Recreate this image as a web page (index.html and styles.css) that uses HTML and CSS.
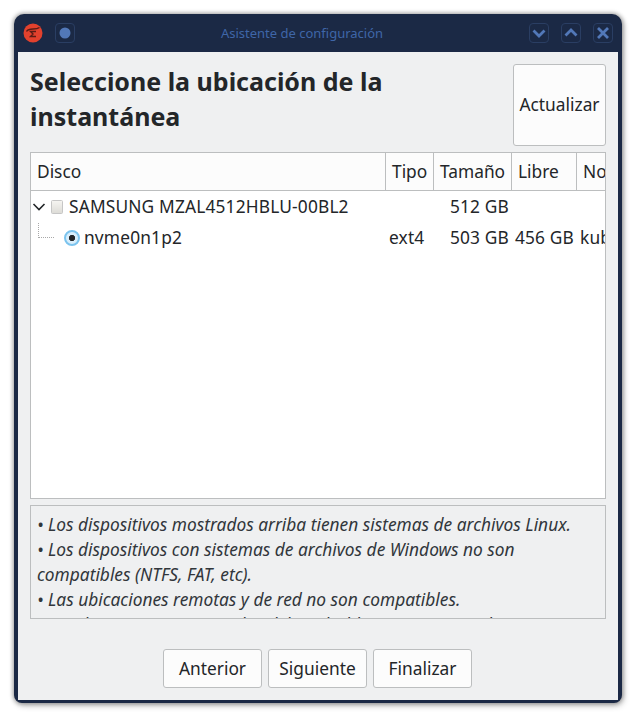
FILE: index.html
```html
<!DOCTYPE html>
<html lang="es">
<head>
<meta charset="utf-8">
<title>Asistente de configuración</title>
<link rel="stylesheet" href="styles.css">
</head>
<body>
<div class="window">
  <header class="titlebar">
    <div class="tb-group">
      <svg class="app-icon" width="20" height="20" viewBox="0 0 20 20"><circle cx="10" cy="10" r="9.500" fill="#e2412d"/><path d="M3.500 8.500c1.500-2.500 4-2.500 6.500-2.500s4.500 0 6.500-1.500" fill="none" stroke="#5a1c16" stroke-width="1.400"/><path d="M13 8.500H7.500l2.500 2.500-2.500 2.500H13" fill="none" stroke="#5a1c16" stroke-width="1.400"/></svg>
      <span class="tb-btn"><svg width="20" height="20" viewBox="0 0 20 20"><circle cx="10" cy="10" r="5.500" fill="#5278b8"/></svg></span>
    </div>
    <div class="tb-title">Asistente de configuración</div>
    <div class="tb-group tb-right">
      <span class="tb-btn"><svg width="20" height="20" viewBox="0 0 20 20"><path d="M4.500 7.500 10 13l5.500-5.500" fill="none" stroke="#5278b8" stroke-width="2.800"/></svg></span>
      <span class="tb-btn"><svg width="20" height="20" viewBox="0 0 20 20"><path d="M4.500 12.500 10 7l5.500 5.500" fill="none" stroke="#5278b8" stroke-width="2.800"/></svg></span>
      <span class="tb-btn"><svg width="20" height="20" viewBox="0 0 20 20"><path d="M5 5l10 10M15 5 5 15" fill="none" stroke="#5278b8" stroke-width="2.800"/></svg></span>
    </div>
  </header>
  <main class="content">
    <div class="head-row">
      <h1 class="heading">Seleccione la ubicación de la instantánea</h1>
      <button class="btn btn-refresh">Actualizar</button>
    </div>
    <div class="tree">
      <div class="tree-head">
        <div class="th c-disk">Disco</div>
        <div class="th c-type">Tipo</div>
        <div class="th c-size">Tamaño</div>
        <div class="th c-free">Libre</div>
        <div class="th c-name">Nombre</div>
      </div>
      <div class="row">
        <div class="cell c-disk">
          <svg class="chev" width="14" height="10" viewBox="0 0 14 10"><path d="M1.500 2 7 7.500 12.500 2" fill="none" stroke="#232629" stroke-width="1.600"/></svg>
          <svg class="disk-icon" width="12" height="14" viewBox="0 0 12 14"><defs><linearGradient id="dg" x1="0" y1="0" x2="0" y2="1"><stop offset="0" stop-color="#f6f5f2"/><stop offset="1" stop-color="#dcdbd6"/></linearGradient></defs><rect x=".5" y=".5" width="11" height="13" rx="1" fill="url(#dg)" stroke="#c6c6c6"/></svg>
          <span class="disk-name">SAMSUNG MZAL4512HBLU-00BL2</span>
        </div>
        <div class="cell c-type"></div>
        <div class="cell c-size right">512 GB</div>
        <div class="cell c-free"></div>
        <div class="cell c-name"></div>
      </div>
      <div class="row">
        <div class="cell c-disk">
          <span class="branch"></span>
          <span class="radio"></span>
          <span class="part-name">nvme0n1p2</span>
        </div>
        <div class="cell c-type">ext4</div>
        <div class="cell c-size right">503 GB</div>
        <div class="cell c-free right">456 GB</div>
        <div class="cell c-name">kubuntu</div>
      </div>
    </div>
    <div class="notes">
      <p>• Los dispositivos mostrados arriba tienen sistemas de archivos Linux.</p>
      <p>• Los dispositivos con sistemas de archivos de Windows no son compatibles (NTFS, FAT, etc).</p>
      <p>• Las ubicaciones remotas y de red no son compatibles.</p>
      <p>• Los dispositivos encriptados deben desbloquearse antes de usarse.</p>
    </div>
    <div class="actions">
      <button class="btn btn-nav">Anterior</button>
      <button class="btn btn-nav">Siguiente</button>
      <button class="btn btn-nav">Finalizar</button>
    </div>
  </main>
</div>
</body>
</html>
```
FILE: styles.css
```css
* { box-sizing: border-box; }
html, body { margin: 0; height: 100%; background: #fff; }
body { padding: 14px 14px 15px 14px; font-family: "Noto Sans", sans-serif; font-size: 17.330px; color: #232629; }
.window { width: 608px; height: 689px; background: #1b2945; border-radius: 10px 10px 8px 8px; box-shadow: 0 0 4px 1px rgba(0,0,0,.35), 2px 3px 6px rgba(0,0,0,.2); display: flex; flex-direction: column; padding: 0 4px 3px; overflow: hidden; }
.titlebar { height: 38px; flex: none; display: flex; align-items: center; justify-content: space-between; position: relative; padding: 0 5px; }
.tb-group { display: flex; align-items: center; gap: 12px; }
.tb-btn { width: 20px; height: 20px; border: 1px solid #2a3e63; border-radius: 4px; display: flex; align-items: center; justify-content: center; }
.tb-btn svg { flex: none; }
.tb-title { position: absolute; left: 0; right: 32px; text-align: center; font-size: 13px; color: #3f66a8; pointer-events: none; }
.content { flex: 1; background: #eff0f1; display: flex; flex-direction: column; padding: 12px 12px 0; min-height: 0; }
.head-row { display: flex; justify-content: space-between; align-items: flex-start; height: 88px; flex: none; }
.heading { margin: 0; font-size: 25px; line-height: 35px; font-weight: 700; width: 440px; }
.btn { font-family: inherit; font-size: 17.330px; color: #232629; background: #fcfcfc; border: 1px solid #bcbebf; border-radius: 3px; padding: 0 0 2px; }
.btn-refresh { width: 93px; height: 82px; }
.tree { height: 347px; flex: none; background: #fff; border: 1px solid #bcbebf; overflow: hidden; }
.tree-head { display: flex; height: 38px; background: #fcfcfc; border-bottom: 1px solid #bcbebf; }
.th { line-height: 37px; padding-left: 6px; border-right: 1px solid #bcbebf; flex: none; white-space: nowrap; overflow: hidden; }
.th.c-name { border-right: 0; }
.c-disk { width: 355px; }
.c-type { width: 48px; }
.c-size { width: 78px; }
.c-free { width: 65px; }
.c-name { width: 29px; }
.row { display: flex; height: 31px; align-items: center; white-space: nowrap; letter-spacing: .16px; }
.cell { flex: none; overflow: hidden; line-height: 31px; height: 31px; display: flex; align-items: center; }
.cell.c-type, .cell.c-name { padding-left: 3px; }
.right { justify-content: flex-end; padding-right: 3px; }
.chev { margin-left: 1px; flex: none; }
.disk-icon { margin-left: 5px; margin-right: 6px; flex: none; }
.branch { width: 16px; height: 15px; margin: -14px 0 0 7px; border-left: 1px dotted #a8a8a8; border-bottom: 1px dotted #a8a8a8; flex: none; }
.radio { width: 16px; height: 16px; margin-left: 10px; margin-right: 4px; border-radius: 50%; flex: none; background: radial-gradient(circle, #232629 0 2.800px, #d9eefb 3.500px); border: 2px solid #7cc4ee; }
.notes { margin-top: 6px; height: 114px; flex: none; border: 1px solid #bcbebf; padding: 6px 6px 0; overflow: hidden; font-style: italic; line-height: 25px; color: #31363b; }
.notes p { margin: 0; }
.actions { flex: none; display: flex; justify-content: center; gap: 6px; margin-top: 30px; padding-right: 1px; }
.btn-nav { width: 99px; height: 39px; }
```
